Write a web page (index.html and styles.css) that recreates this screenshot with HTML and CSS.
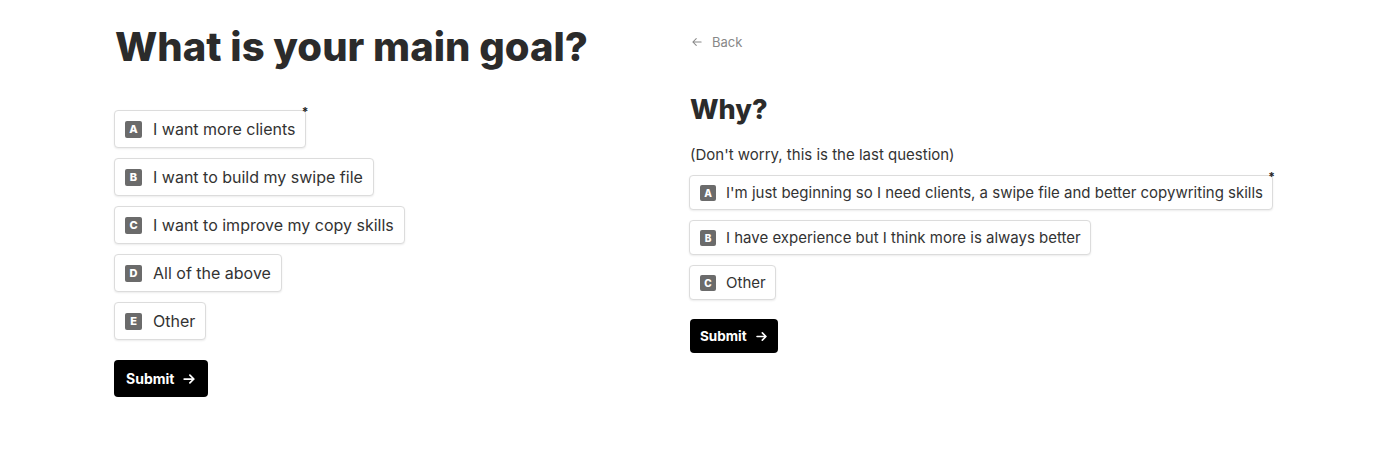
FILE: index.html
```html
<!DOCTYPE html>
<html lang="en">
<head>
  <meta charset="UTF-8">
  <meta name="viewport" content="width=device-width, initial-scale=1.0">
  <title>Survey</title>
  <link rel="stylesheet" href="styles.css">
</head>
<body>

  <div class="page">
    <!-- first question -->
    <div class="step step-goal">
      <h1>What is your main goal?</h1>
      <div class="choices">
        <div class="choice"><span class="key">A</span>I want more clients<span class="req">*</span></div>
        <div class="choice"><span class="key">B</span>I want to build my swipe file</div>
        <div class="choice"><span class="key">C</span>I want to improve my copy skills</div>
        <div class="choice"><span class="key">D</span>All of the above</div>
        <div class="choice"><span class="key">E</span>Other</div>
      </div>
      <button class="submit">Submit
        <svg width="14" height="14" viewBox="0 0 16 16" fill="none" stroke="#fff" stroke-width="2" stroke-linecap="round" stroke-linejoin="round"><path d="M2.5 8h11M9 3.5 13.5 8 9 12.5"/></svg>
      </button>
    </div>

    <!-- second question -->
    <div class="step step-why">
      <a class="back" href="#">
        <svg width="12" height="12" viewBox="0 0 16 16" fill="none" stroke="#888" stroke-width="1.4" stroke-linecap="round" stroke-linejoin="round"><path d="M13.5 8h-11M7 3.5 2.5 8 7 12.5"/></svg>
        Back
      </a>
      <h2>Why?</h2>
      <p class="hint">(Don't worry, this is the last question)</p>
      <div class="choices">
        <div class="choice"><span class="key">A</span>I'm just beginning so I need clients, a swipe file and better copywriting skills<span class="req">*</span></div>
        <div class="choice"><span class="key">B</span>I have experience but I think more is always better</div>
        <div class="choice"><span class="key">C</span>Other</div>
      </div>
      <button class="submit">Submit
        <svg width="13" height="13" viewBox="0 0 16 16" fill="none" stroke="#fff" stroke-width="2" stroke-linecap="round" stroke-linejoin="round"><path d="M2.5 8h11M9 3.5 13.5 8 9 12.5"/></svg>
      </button>
    </div>
  </div>

</body>
</html>
```

FILE: styles.css
```css
/* survey steps */
body {
  font-family: Inter, "Open Sans", Arial, sans-serif;
  background-color: #fff;
  color: #333;
  margin: 0;
}

.page {
  display: flex;
  padding-left: 114px;
}

.step {
  display: flex;
  flex-direction: column;
  align-items: flex-start;
}

.step-goal {
  width: 575px;
  padding-top: 23px;
}

.step-why {
  padding-top: 34px;
}

h1 {
  font-size: 40px;
  font-weight: 800;
  line-height: 48px;
  color: #2b2b2b;
  margin: 0 0 39px 1px;
}

h2 {
  font-size: 27px;
  font-weight: 800;
  line-height: 34px;
  color: #2b2b2b;
  margin: 0 0 19px 1px;
}

.back {
  display: flex;
  align-items: center;
  gap: 9px;
  height: 16px;
  font-size: 13px;
  color: #888;
  text-decoration: none;
  margin: 0 0 43px 2px;
}

.hint {
  font-size: 15px;
  line-height: 18px;
  color: #333;
  margin: 0 0 11px 1px;
}

.choices {
  display: flex;
  flex-direction: column;
  align-items: flex-start;
  gap: 10px;
}

.choice {
  position: relative;
  display: flex;
  align-items: center;
  height: 38px;
  box-sizing: border-box;
  padding: 0 10px 0 10px;
  border: 1px solid #dcdcdc;
  border-radius: 4px;
  box-shadow: 0 1px 2px rgba(0, 0, 0, 0.08);
  font-size: 16px;
  color: #333;
  background: #fff;
}

.key {
  display: inline-flex;
  align-items: center;
  justify-content: center;
  width: 17px;
  height: 17px;
  margin-right: 11px;
  border-radius: 2px;
  background-color: #6b6b6b;
  color: #fff;
  font-size: 11px;
  font-weight: 800;
}

.req {
  position: absolute;
  top: -7px;
  right: -3px;
  font-size: 12px;
  font-weight: 700;
  color: #222;
}

.submit {
  display: flex;
  align-items: center;
  gap: 8px;
  margin-top: 20px;
  height: 37px;
  padding: 0 12px;
  border: none;
  border-radius: 4px;
  background-color: #000;
  color: #fff;
  font-family: inherit;
  font-size: 14px;
  font-weight: 700;
}

.step-why .choice {
  height: 35px;
  font-size: 15px;
  padding: 0 9px 0 10px;
}

.step-why .key {
  width: 16px;
  height: 16px;
  margin-right: 10px;
  font-size: 10px;
}

.step-why .submit {
  margin: 19px 0 0 1px;
  height: 34px;
  padding: 0 10px;
  font-size: 13.5px;
}
```
